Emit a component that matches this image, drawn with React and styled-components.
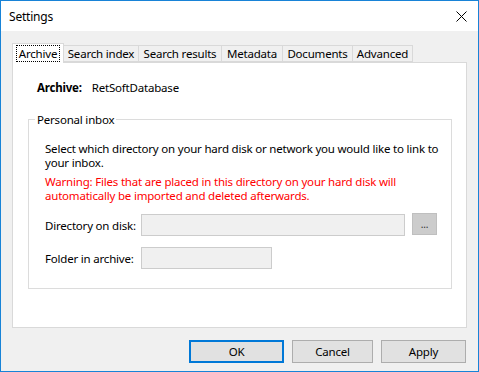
import React from 'react'
import styled, { createGlobalStyle } from 'styled-components'

const GlobalStyle = createGlobalStyle`
  html, body { margin: 0; padding: 0; background: #fff; }
  body {
    font-family: "Noto Sans", "Liberation Sans", sans-serif;
    font-size: 11.5px;
    letter-spacing: -0.2px;
    color: #000;
  }
  * { box-sizing: border-box; }
`

const tabs = [
  { name: 'Archive', w: 52 },
  { name: 'Search index', w: 75 },
  { name: 'Search results', w: 83 },
  { name: 'Metadata', w: 61 },
  { name: 'Documents', w: 70 },
  { name: 'Advanced', w: 60 },
]

const Window = styled.div`
  width: 479px;
  height: 372px;
  border: 1px solid #1883d7;
  display: flex;
  flex-direction: column;
  background: #f0f0f0;
`

const TitleBar = styled.div`
  height: 30px;
  background: #fff;
  display: flex;
  align-items: center;
  justify-content: space-between;
  padding: 0 11px 0 8px;
  font-size: 12px;
`

const Body = styled.div`
  flex: 1;
  display: flex;
  flex-direction: column;
  padding: 12px 11px 0 11px;
`

const TabStrip = styled.div`
  display: flex;
  align-items: flex-end;
  height: 19px;
  position: relative;
  z-index: 1;
`

const Tab = styled.div`
  width: ${p => p.w}px;
  height: ${p => (p.active ? '20px' : '17px')};
  margin-bottom: ${p => (p.active ? '-1px' : '0')};
  background: ${p => (p.active ? '#fff' : '#f0f0f0')};
  border: 1px solid #d9d9d9;
  border-bottom: ${p => (p.active ? 'none' : '1px solid #d9d9d9')};
  border-left: ${p => (p.active ? '1px solid #d9d9d9' : 'none')};
  display: flex;
  align-items: center;
  justify-content: center;
  white-space: nowrap;
`

const FocusText = styled.span`
  outline: 1px dotted #000;
  padding: 0 2px;
  line-height: 15px;
`

const Panel = styled.div`
  height: 266px;
  background: #fff;
  border: 1px solid #d9d9d9;
  padding: 16px 14px 0 15px;
`

const ArchiveRow = styled.div`
  display: flex;
  gap: 10px;
  padding-left: 9px;
  line-height: 17px;
`

const Bold = styled.span`
  font-weight: bold;
`

const Group = styled.fieldset`
  margin: 16px 0 0 0;
  height: 177px;
  border: 1px solid #dcdcdc;
  padding: 15px 6px 0 16px;
`

const Legend = styled.legend`
  padding: 0 2px;
  margin-left: -10px;
  line-height: 15px;
`

const Para = styled.div`
  color: ${p => p.color || '#000'};
  line-height: 14px;
  margin-bottom: ${p => p.gap || 0}px;
`

const FieldRow = styled.div`
  display: flex;
  align-items: center;
  margin-top: ${p => p.top}px;
`

const Label = styled.div`
  width: 96px;
  white-space: nowrap;
`

const Input = styled.div`
  width: ${p => p.w}px;
  height: 22px;
  background: #f0f0f0;
  border: 1px solid #cccccc;
`

const DotsButton = styled.div`
  width: 25px;
  height: 22px;
  margin-left: 7px;
  margin-top: -2px;
  background: #cccccc;
  border: 1px solid #bfbfbf;
  display: flex;
  align-items: center;
  justify-content: center;
  font-size: 10px;
  color: #333;
`

const Footer = styled.div`
  display: flex;
  justify-content: flex-end;
  gap: 8px;
  margin-top: 12px;
  padding-right: 1px;
`

const Button = styled.div`
  width: ${p => p.w}px;
  height: 23px;
  background: #e1e1e1;
  border: ${p => (p.primary ? '2px solid #0078d7' : '1px solid #adadad')};
  display: flex;
  align-items: center;
  justify-content: center;
`

const CloseIcon = () => (
  <svg width="11" height="11" viewBox="0 0 11 11">
    <path d="M0.5 0.5 L10.5 10.5 M10.5 0.5 L0.5 10.5" stroke="#000" strokeWidth="1" fill="none" />
  </svg>
)

const App = () => {
  return (
    <>
      <GlobalStyle />
      <Window>
        <TitleBar>
          <span>Settings</span>
          <CloseIcon />
        </TitleBar>
        <Body>
          <TabStrip>
            {tabs.map((t, i) => (
              <Tab key={t.name} w={t.w} active={i === 0}>
                {i === 0 ? <FocusText>{t.name}</FocusText> : t.name}
              </Tab>
            ))}
          </TabStrip>
          <Panel>
            <ArchiveRow>
              <Bold>Archive:</Bold>
              <span>RetSoftDatabase</span>
            </ArchiveRow>
            <Group>
              <Legend>Personal inbox</Legend>
              <Para gap={5}>
                Select which directory on your hard disk or network you would like to link to your inbox.
              </Para>
              <Para color="#ff0000">
                Warning: Files that are placed in this directory on your hard disk will automatically be imported and deleted afterwards.
              </Para>
              <FieldRow top={11}>
                <Label>Directory on disk:</Label>
                <Input w={264} />
                <DotsButton>...</DotsButton>
              </FieldRow>
              <FieldRow top={11}>
                <Label>Folder in archive:</Label>
                <Input w={131} />
              </FieldRow>
            </Group>
          </Panel>
          <Footer>
            <Button primary w={95}>OK</Button>
            <Button w={81}>Cancel</Button>
            <Button w={85}>Apply</Button>
          </Footer>
        </Body>
      </Window>
    </>
  )
}

export default App
